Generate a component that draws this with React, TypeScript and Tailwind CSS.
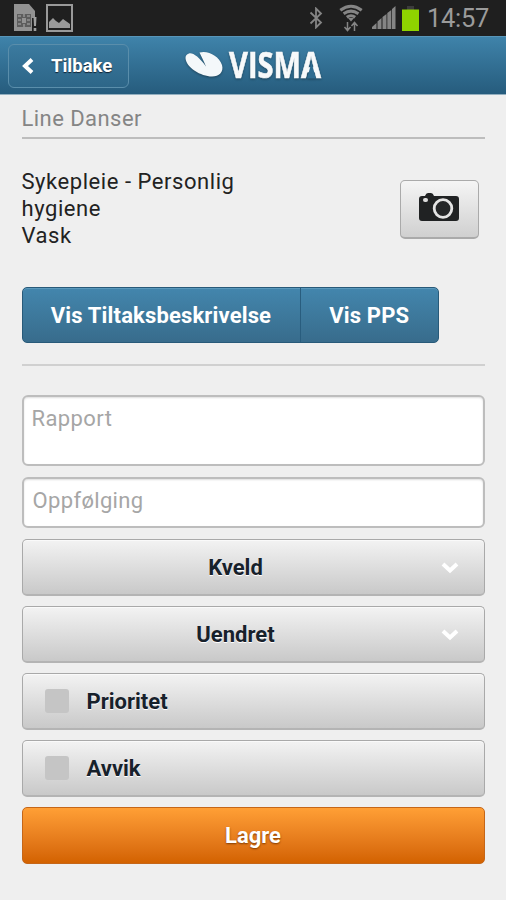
import React from 'react';

const PANEL = 'w-full rounded-[5px] border border-[#a9a9a9] border-b-2 border-b-[#b4b4b4] bg-linear-to-b from-[#f3f3f3] to-[#c9c9c9] shadow-[inset_0_1px_0_#fafafa]';
const LABEL = 'font-bold text-[#17212b] [text-shadow:0_1px_0_#fff]';

const StatusBar: React.FC = () => (
  <header className="flex h-9 items-center justify-between bg-[#1f1f1f] pl-[13px] pr-[17px]">
    <div className="flex items-center gap-[7px]">
      {/* SIM card warning */}
      <svg width="26" height="30" viewBox="0 0 26 30">
        <path d="M1 1h15l6 7v7h-3v13H1z" fill="#929292" />
        <path d="M4 11h14v13H4z" fill="#5d5d5d" />
        <path d="M5 13h3M5 17h3M5 21h3M14 13h3M14 17h3M14 21h3M11 11v3M11 21v3" stroke="#929292" strokeWidth="1.6" />
        <path d="M9 15h4v5H9z" fill="#929292" />
        <path d="M20.500 14h3l-.5 9h-2zM20.700 25h2.600v3h-2.600z" fill="#a0a0a0" />
      </svg>
      <svg width="27" height="28" viewBox="0 0 27 28">
        <rect x="1" y="1" width="25" height="26" fill="none" stroke="#9a9a9a" strokeWidth="2" />
        <path d="M3 24v-6l4-4 3 3 3 2 4-4 7 5v4z" fill="#9a9a9a" />
      </svg>
    </div>
    <div className="flex items-center">
      <svg className="mr-[16px]" width="14" height="22" viewBox="0 0 14 22" fill="none" stroke="#858585" strokeWidth="1.8">
        <path d="M1.500 5.500 12 15.500 7 20.500V1.500l5 5L1.500 16.500" />
      </svg>
      <svg className="mr-[9px]" width="24" height="29" viewBox="0 0 24 29" fill="none" stroke="#858585">
        <g strokeWidth="3">
          <path d="M1.300 6.200Q12-1.800 22.700 6.200" />
          <path d="M4.600 9.800q7.400-5.400 14.800 0" />
          <path d="M7.800 13.200q4.200-3 8.400 0" />
        </g>
        <path d="M9 14h6l-3 3.500z" fill="#858585" stroke="none" />
        <path d="M8.500 18v8M5.500 23l3 3.500 3-3.500M15.500 27v-8M12.500 22l3-3.500 3 3.500" strokeWidth="1.500" />
      </svg>
      <svg className="mr-[6px]" width="24" height="24" viewBox="0 0 24 24" fill="#858585">
        <path d="M0 23v-2l4.500-4v6zM5.500 23v-7.500l4-3.500v11zM10.500 23V11l4-3v15zM15.300 23V7l4-3v19zM20 23V3l3.500-3v23z" />
      </svg>
      <svg className="mr-[8px]" width="17" height="26" viewBox="0 0 17 26">
        <path d="M5 1h7v4H5z" fill="#3c3c3c" />
        <path d="M0 4.500h17V26H0z" fill="#8fd400" />
      </svg>
      <span className="w-[62px] whitespace-nowrap text-[25.5px] leading-9 tracking-[-0.3px] text-[#9b9b9b]">14:57</span>
    </div>
  </header>
);

const VismaLogo: React.FC = () => (
  <div className="flex items-center pl-[2px]">
    <svg className="overflow-visible drop-shadow-[0_1px_1px_rgba(0,0,0,0.35)]" width="140" height="56" viewBox="0 -4 140 56">
      <path d="M5 11.500C9 10.500 15 15 22 24.500 19.500 18.500 17 14 15.500 10.500 24 8 35 14 38 23c2 7-3 11.500-10 11.500C17 34.500 2 25.500 1.500 16c0-2 1-4 3.500-4.500z" fill="#f4f8fa" />
      <text x="45" y="36" textLength="92" lengthAdjust="spacingAndGlyphs" fill="#f7f9fa" stroke="#f7f9fa" strokeWidth="0.6" className="font-['Open_Sans'] text-[35px] font-bold">VISMA</text>
      {/* the last letter of the wordmark has no crossbar */}
      <path d="M127.500 20.500 132 36.500h-9z" fill="#2f6c90" />
    </svg>
  </div>
);

const TopBar: React.FC = () => (
  <nav className="grid h-[59px] grid-cols-[1fr_142px_1fr] items-center border-b border-[#93afbf] border-t border-t-[#5895b8] bg-linear-to-b from-[#3f83aa] to-[#265c7d]">
    <button className="ml-2 mt-px flex h-[44px] w-[121px] items-center rounded-[6px] border border-[#5a8eab] bg-linear-to-b from-[#3b7a9f] to-[#2d6688] pl-[12px]">
      <svg width="13" height="16" viewBox="0 0 13 16" fill="none" stroke="#fff" strokeWidth="4">
        <path d="M11 1.500 4 8l7 6.500" />
      </svg>
      <span className="ml-[17px] pt-0.5 text-[18.5px] font-bold text-white [text-shadow:0_1px_1px_#123]">Tilbake</span>
    </button>
    <VismaLogo />
  </nav>
);

const Chevron: React.FC = () => (
  <svg className="absolute right-[25px] top-[22px]" width="18" height="12" viewBox="0 0 18 12" fill="none" stroke="#fff" strokeWidth="4">
    <path d="m2 2 7 6.500L16 2" />
  </svg>
);

const SelectRow: React.FC<{ label: string }> = ({ label }) => (
  <button className={`${PANEL} relative flex h-[57px] items-center justify-center pr-[35px]`}>
    <span className={LABEL}>{label}</span>
    <Chevron />
  </button>
);

const CheckRow: React.FC<{ label: string }> = ({ label }) => (
  <label className={`${PANEL} flex h-[57px] items-center pl-[22px]`}>
    <span className="h-6 w-6 rounded-[3px] bg-[#c5c5c5]" />
    <span className={`${LABEL} ml-[18px]`}>{label}</span>
  </label>
);

const App: React.FC = () => {
  return (
    <div className="h-[900px] w-[506px] overflow-hidden bg-[#efefef] font-[Roboto,sans-serif] text-[22px]">
      <StatusBar />
      <TopBar />

      <main className="px-[21.5px]">
        <h1 className="h-[44px] border-b-2 border-[#bdbdbd] pt-[10px] leading-[27px] tracking-[0.45px] text-[#858585]">Line Danser</h1>

        <section className="flex h-[148px] justify-between pt-[29px]">
          <p className="w-[240px] leading-[27px] tracking-[0.55px] text-[#222]">
            Sykepleie - Personlig hygiene
            <br />
            Vask
          </p>
          <button className="mr-[6px] mt-[12px] flex h-[59px] w-[79px] items-center justify-center rounded-[5px] border border-[#aaa] border-b-2 bg-linear-to-b from-[#f5f5f5] to-[#d0d0d0]">
            <svg className="-mt-1" width="40" height="30" viewBox="0 0 40 30">
              <path d="M3 4h3q1-3 3-3h3q2 0 3 3h22q3 0 3 3v19q0 3-3 3H3q-3 0-3-3V7q0-3 3-3z" fill="#202223" />
              <circle cx="24" cy="16.500" r="8.800" fill="#252728" stroke="#e4e4e4" strokeWidth="2.800" />
              <rect x="4" y="6" width="5" height="4" rx="2" fill="#ddd" />
            </svg>
          </button>
        </section>

        <div className="flex h-[56px] w-[417.5px] rounded-[5px] border border-[#285a79] bg-linear-to-b from-[#4386ad] to-[#386c8c] font-bold text-white shadow-[inset_0_1px_0_#5b99bc] [text-shadow:0_1px_2px_#0b2638]">
          <button className="w-[278px] border-r border-[#295d7e] tracking-[0.15px]">Vis Tiltaksbeskrivelse</button>
          <button className="flex-1 tracking-[0.15px]">Vis PPS</button>
        </div>
        <hr className="mb-[29px] mt-[21px] border-t-2 border-[#d0d0d0]" />

        <form className="flex flex-col">
          <textarea
            placeholder="Rapport"
            className="mb-[11px] block h-[71px] w-full resize-none rounded-[6px] border-2 border-[#bdbdbd] bg-white px-2 pt-[8px] leading-[27px] tracking-[0.4px] shadow-[inset_0_1px_2px_#ddd] placeholder:text-[#a6a6a6]"
          />
          <input
            placeholder="Oppfølging"
            className="mb-[11px] h-[51px] w-full rounded-[6px] border-2 border-[#bdbdbd] bg-white px-[9px] pb-1 tracking-[0.35px] shadow-[inset_0_1px_2px_#ddd] placeholder:text-[#a6a6a6]"
          />
          <div className="flex flex-col gap-[10px]">
            <SelectRow label="Kveld" />
            <SelectRow label="Uendret" />
            <CheckRow label="Prioritet" />
            <CheckRow label="Avvik" />
            <button className="h-[57px] w-full rounded-[5px] border border-[#c56618] bg-linear-to-b from-[#ff9f35] to-[#d36200] font-bold text-white [text-shadow:0_1px_2px_#803b00]">Lagre</button>
          </div>
        </form>
      </main>
    </div>
  );
};

export default App;
